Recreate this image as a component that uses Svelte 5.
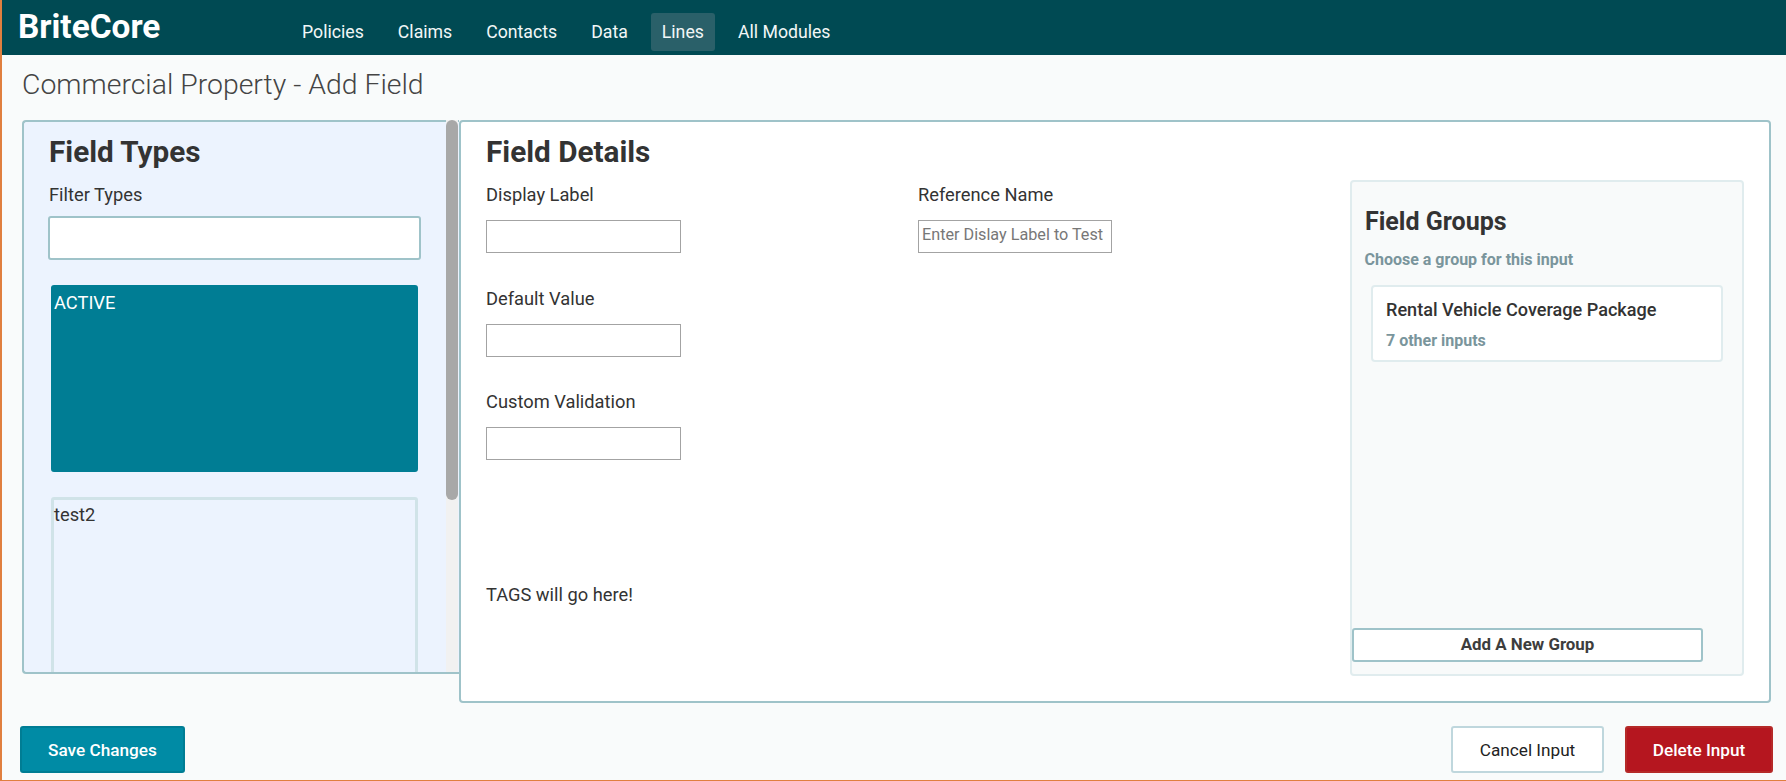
<script>
  let leftFields = ["Display Label", "Default Value", "Custom Validation"];
  let types = [
    { name: "ACTIVE", active: true },
    { name: "test2", active: false },
  ];
</script>

<div class="app">
  <header class="topbar">
    <div class="logo">BriteCore</div>
    <nav>
      <a href="#policies">Policies</a>
      <a href="#claims">Claims</a>
      <a href="#contacts">Contacts</a>
      <a href="#data">Data</a>
      <a href="#lines" class="current">Lines</a>
      <a href="#modules">All Modules</a>
    </nav>
  </header>

  <h1>Commercial Property - Add Field</h1>

  <main>
    <div class="types-wrap">
      <section class="types">
        <h2>Field Types</h2>
        <label for="filter">Filter Types</label>
        <input id="filter" class="filter" type="text" />
        {#each types as type}
          <div class="type" class:active={type.active}>{type.name}</div>
        {/each}
      </section>
      <!-- scrollbar drawn by hand, headless chrome hides the real one -->
      <div class="scrollbar"><div class="thumb"></div></div>
    </div>

    <section class="details">
      <div class="form">
        <h2>Field Details</h2>
        <div class="columns">
          <div class="column">
            {#each leftFields as field}
              <div class="field">
                <label for={field}>{field}</label>
                <input id={field} type="text" />
              </div>
            {/each}
          </div>
          <div class="column second">
            <div class="field">
              <label for="ref">Reference Name</label>
              <input id="ref" type="text" placeholder="Enter Dislay Label to Test" />
            </div>
          </div>
        </div>
        <p class="tags">TAGS will go here!</p>
      </div>

      <aside class="groups">
        <h3>Field Groups</h3>
        <p class="hint">Choose a group for this input</p>
        <div class="group">
          <div class="group-name">Rental Vehicle Coverage Package</div>
          <div class="group-count">7 other inputs</div>
        </div>
        <button class="add">Add A New Group</button>
      </aside>
    </section>
  </main>

  <footer>
    <button class="btn save">Save Changes</button>
    <div class="right">
      <button class="btn cancel">Cancel Input</button>
      <button class="btn delete">Delete Input</button>
    </div>
  </footer>
</div>

<style>
  :global(body) {
    margin: 0;
    background: #f9fbfb;
  }

  .app {
    box-sizing: border-box;
    width: 1786px;
    height: 781px;
    overflow: hidden;
    border-left: 2px solid #e07f3f;
    border-bottom: 1px solid #e07f3f;
    background: #f9fbfb;
    color: #333;
    font-family: Roboto, "Liberation Sans", sans-serif;
    font-size: 18.3px;
  }

  .topbar {
    display: flex;
    height: 55px;
    background: #004a53;
  }

  .logo {
    width: 289px;
    padding-left: 16px;
    box-sizing: border-box;
    color: #fff;
    font-size: 33.4px;
    font-weight: 700;
    line-height: 53px;
  }

  nav {
    display: flex;
    gap: 12px;
    align-items: flex-start;
    padding-top: 13px;
  }

  nav a {
    padding: 0 11px;
    border-radius: 3px;
    color: #f2f7f7;
    font-size: 17.7px;
    line-height: 38px;
    text-decoration: none;
  }

  nav a.current {
    background: #2a6069;
  }

  h1 {
    margin: 0;
    height: 65px;
    padding-left: 20px;
    box-sizing: border-box;
    color: #444;
    font-size: 28.4px;
    font-weight: 300;
    line-height: 60px;
  }

  main {
    display: flex;
    align-items: flex-start;
    padding-left: 20px;
  }

  h2 {
    margin: 0;
    color: #333;
    font-size: 29.7px;
    font-weight: 700;
    line-height: 32px;
  }

  label {
    display: block;
    line-height: 24px;
  }

  .types-wrap {
    position: relative;
    width: 437px;
  }

  .types {
    box-sizing: border-box;
    height: 554px;
    padding: 14px 0 0 25px;
    overflow: hidden;
    border: 2px solid #9fc3c9;
    border-right: 0;
    border-radius: 4px 0 0 4px;
    background: #ecf3fe;
  }

  .scrollbar {
    position: absolute;
    top: 0;
    right: 1px;
    bottom: 2px;
    width: 12px;
    background: #f1f1f1;
  }

  .thumb {
    height: 380px;
    border-radius: 6px;
    background: #a8a8a8;
  }

  .types label {
    margin-top: 15px;
  }

  .filter {
    display: block;
    box-sizing: border-box;
    width: 373px;
    height: 44px;
    margin: 9px 0 25px -1px;
    border: 2px solid #9fc3c9;
    border-radius: 3px;
    background: #fff;
  }

  .type {
    box-sizing: border-box;
    width: 367px;
    height: 187px;
    margin: 0 0 25px 2px;
    padding: 3px 0 0 0;
    border: 3px solid #d0e3e8;
    border-radius: 3px;
    line-height: 24px;
  }

  .type.active {
    border-color: #007d94;
    background: #007d94;
    color: #fff;
  }

  .details {
    display: flex;
    box-sizing: border-box;
    width: 1312px;
    height: 583px;
    padding: 14px 25px 0 25px;
    border: 2px solid #9fc3c9;
    border-radius: 4px;
    background: #fff;
  }

  .form {
    flex: 1;
  }

  .columns {
    display: flex;
    margin-top: 14px;
  }

  .column {
    width: 432px;
  }

  .column.second input {
    width: 194px;
  }

  .field {
    margin-bottom: 32.5px;
  }

  .field label {
    padding-top: 1px;
    margin-bottom: 13px;
  }

  .field input {
    display: block;
    box-sizing: border-box;
    width: 195px;
    height: 33px;
    padding: 0 3px 4px;
    border: 1px solid #a3a3a3;
    border-radius: 0;
    background: #fff;
    color: #333;
    font-family: inherit;
    font-size: 16.2px;
  }

  .field input::placeholder {
    color: #777;
  }

  .tags {
    margin: 90px 0 0;
    line-height: 24px;
  }

  .groups {
    display: flex;
    flex-direction: column;
    align-items: flex-start;
    box-sizing: border-box;
    width: 394px;
    height: 496px;
    margin-top: 44px;
    padding-bottom: 12px;
    border: 2px solid #e0ecee;
    border-radius: 4px;
    background: #f8fafa;
  }

  h3 {
    margin: 25px 0 0 13px;
    color: #333;
    font-size: 25px;
    font-weight: 700;
    line-height: 30px;
  }

  .hint {
    margin: 13px 0 0 12.5px;
    color: #7a959c;
    font-size: 16px;
    font-weight: 700;
    line-height: 20px;
  }

  .group {
    box-sizing: border-box;
    width: 352px;
    height: 77px;
    margin: 15px 0 0 19px;
    padding: 12px 0 0 13px;
    border: 2px solid #e0ecee;
    border-radius: 4px;
    background: #fff;
  }

  .group-name {
    color: #333;
    font-size: 18.1px;
    font-weight: 500;
    line-height: 22px;
  }

  .group-count {
    margin-top: 10px;
    color: #7a959c;
    font-size: 16px;
    font-weight: 700;
    line-height: 20px;
  }

  .add {
    box-sizing: border-box;
    width: 351px;
    height: 34px;
    margin-top: auto;
    padding-bottom: 3px;
    border: 2px solid #9fc3c9;
    border-radius: 3px;
    background: #fff;
    color: #3d3d3d;
    font-family: inherit;
    font-size: 16.9px;
    font-weight: 700;
  }

  footer {
    display: flex;
    justify-content: space-between;
    margin-top: 23px;
    padding: 0 13px 0 18px;
  }

  .right {
    display: flex;
    gap: 21px;
  }

  .btn {
    box-sizing: border-box;
    height: 47px;
    border-radius: 3px;
    font-family: inherit;
    font-size: 17.2px;
    font-weight: 500;
  }

  .save {
    width: 165px;
    border: 2px solid #007d94;
    background: #008ba5;
    color: #fff;
  }

  .cancel {
    width: 153px;
    border: 2px solid #bfd7dd;
    background: #fff;
    color: #222;
    font-weight: 400;
  }

  .delete {
    width: 148px;
    border: 2px solid #b52a28;
    background: #b5161f;
    color: #fff;
  }
</style>
